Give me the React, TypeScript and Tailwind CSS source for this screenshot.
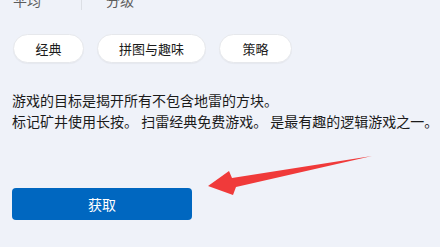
export default function App() {
  const tags = [
    { label: "经典", w: "w-[71px]" },
    { label: "拼图与趣味", w: "w-[109px]" },
    { label: "策略", w: "w-[73px]" },
  ];
  return (
    <div
      className="relative h-[247px] w-[440px] overflow-hidden bg-[#eff2f9] text-[#1b1b1b]"
      style={{ fontFamily: '"Noto Sans CJK SC", "Noto Sans", sans-serif' }}
    >
      <div className="pl-[12px]">
        {/* cut-off stats row */}
        <div className="-mt-[10px] flex h-[20px] items-center text-[14px] leading-5 text-[#5c5c5c]">
          <span className="w-[69px] pl-[1px]">平均</span>
          <span className="h-[20px] w-px bg-[#dcdfe5]"></span>
          <span className="pl-[24px]">分级</span>
        </div>

        {/* tags */}
        <div className="mt-[24px] flex gap-[13px] pl-[1px]">
          {tags.map((t) => (
            <div
              key={t.label}
              className={`${t.w} flex h-[29px] items-center justify-center rounded-full border border-[#e6e8ec] bg-white text-[13px] shadow-[0_1px_1px_rgba(0,0,0,0.04)]`}
            >
              {t.label}
            </div>
          ))}
        </div>

        {/* description */}
        <div className="mt-[27px] text-[14px] leading-[21px]">
          <p>游戏的目标是揭开所有不包含地雷的方块。</p>
          <p>标记矿井使用长按。 扫雷经典免费游戏。 是最有趣的逻辑游戏之一。</p>
        </div>

        <button className="mt-[56px] flex h-[32px] w-[180px] items-center justify-center rounded-[4px] bg-[#0067c0] text-[14px] text-white">
          获取
        </button>
      </div>

      {/* annotation arrow */}
      <svg className="absolute left-0 top-0" width="440" height="247" viewBox="0 0 440 247">
        <polygon
          points="208,186 229,171 232,178 372,156 236,187 233,195"
          fill="#f03a3a"
        />
      </svg>
    </div>
  );
}
